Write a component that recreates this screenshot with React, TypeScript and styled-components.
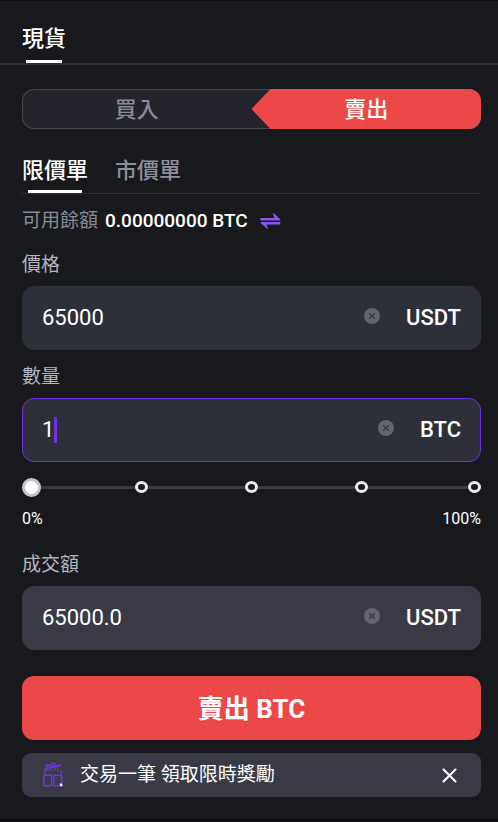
import React, { useState } from "react";
import styled, { createGlobalStyle, css } from "styled-components";

const color = {
  page: "#18191d",
  edge: "#0e0f12",
  line: "#2f2f38",
  field: "#2e3039",
  panel: "#3a3a47",
  white: "#ffffff",
  label: "#b5b6c1",
  muted: "#8a8b98",
  red: "#ec4848",
  violet: "#6f30e6",
};

const GlobalStyle = createGlobalStyle`
  *, *::before, *::after { box-sizing: border-box; }
  body {
    margin: 0;
    background: ${color.page};
    color: ${color.white};
    font-family: Roboto, "Noto Sans CJK TC", sans-serif;
  }
  button, input { font-family: inherit; }
`;

const buttonReset = css`
  margin: 0;
  padding: 0;
  border: 0;
  background: none;
  cursor: pointer;
`;

const Page = styled.main`
  border-top: 1px solid ${color.edge};
  border-bottom: 2px solid ${color.edge};
  padding-bottom: 22px;
`;

const Header = styled.header`
  display: flex;
  padding: 22px 17px 0 22px;
  border-bottom: 2px solid ${color.line};
`;

const Tab = styled.button<{ $active?: boolean; $bar: number; $gap: number }>`
  ${buttonReset}
  display: flex;
  flex-direction: column;
  align-items: center;
  gap: ${(p) => p.$gap}px;
  color: ${(p) => (p.$active ? color.white : "#8e8f9b")};
  font-size: 22px;
  font-weight: 500;
  line-height: 32px;

  &::after {
    content: "";
    width: ${(p) => p.$bar}px;
    height: 3px;
    background: ${(p) => (p.$active ? color.white : "transparent")};
  }
`;

const Form = styled.form`
  display: flex;
  flex-direction: column;
  padding: 24px 17px 0 22px;
`;

const SideSwitch = styled.div`
  display: flex;
  height: 40px;
  border-radius: 12px;
  overflow: hidden;
  background: #24242d;
  box-shadow: inset 0 0 0 1px #474752;
`;

const SideButton = styled.button<{ $selected?: boolean }>`
  ${buttonReset}
  flex: 1;
  padding-top: 2px;
  font-size: 22px;
  line-height: 38px;
  font-weight: 500;
  color: ${(p) => (p.$selected ? color.white : color.muted)};
  ${(p) =>
    p.$selected &&
    css`
      background: ${color.red};
      clip-path: polygon(0 50%, 19px 0, 100% 0, 100% 100%, 19px 100%);
    `}
`;

const OrderTabs = styled.div`
  display: flex;
  gap: 27px;
  padding-top: 26px;
  border-bottom: 1px solid ${color.line};
`;

const Balance = styled.div`
  display: flex;
  align-items: center;
  gap: 7px;
  margin-top: 13px;
  font-size: 19px;
  line-height: 28px;
  color: ${color.muted};
`;

const Amount = styled.strong`
  font-weight: 500;
  color: ${color.white};
`;

const IconButton = styled.button`
  ${buttonReset}
  display: flex;
  flex: none;
`;

const SwapButton = styled(IconButton)`
  margin-left: 5px;
`;

const Field = styled.div<{ $space: number }>`
  display: flex;
  flex-direction: column;
  gap: 7px;
  margin-top: ${(p) => p.$space}px;
`;

const Label = styled.label`
  align-self: flex-start;
  font-size: 19px;
  line-height: 28px;
  color: ${color.label};
`;

const Box = styled.div<{ $active?: boolean; $total?: boolean }>`
  display: flex;
  align-items: center;
  height: 64px;
  padding: 0 19px;
  border: 1px solid
    ${(p) => (p.$active ? color.violet : p.$total ? color.panel : color.field)};
  border-radius: 12px;
  background: ${(p) => (p.$total ? color.panel : color.field)};
`;

const Entry = styled.div`
  display: flex;
  flex: 1;
  min-width: 0;
  align-items: center;
`;

const TextInput = styled.input<{ $fit?: boolean }>`
  min-width: 0;
  flex: ${(p) => (p.$fit ? "none" : "1")};
  margin: 0;
  padding: 0;
  border: 0;
  outline: 0;
  background: none;
  color: ${color.white};
  caret-color: ${(p) => (p.$fit ? "transparent" : color.violet)};
  font-size: 22px;
  line-height: 32px;
`;

const Caret = styled.span`
  width: 3px;
  height: 26px;
  background: ${color.violet};
`;

const ClearButton = styled(IconButton)`
  margin: 0 26px 4px 0;
`;

const Unit = styled.span`
  font-size: 22px;
  font-weight: 500;
  line-height: 32px;
`;

const Slider = styled.div`
  position: relative;
  display: flex;
  align-items: center;
  height: 20px;
  margin-top: 15px;

  &::before {
    content: "";
    flex: 1;
    height: 3px;
    background: ${color.panel};
  }
`;

const Stops = styled.div`
  position: absolute;
  inset: 0;
  display: grid;
  grid-template-columns: 55fr 55fr 55fr 63fr;
  align-items: center;
  padding-left: 3px;
`;

const StopCell = styled.div`
  display: flex;
  justify-content: space-between;
`;

const Stop = styled.span`
  width: 13px;
  height: 12px;
  border: 3px solid #ececec;
  border-radius: 50%;
  background: ${color.page};
`;

const thumb = css`
  width: 19px;
  height: 19px;
  border: 3px solid #c5c6d0;
  border-radius: 50%;
  background: ${color.white};
`;

const Range = styled.input`
  appearance: none;
  position: absolute;
  inset: 0;
  width: 100%;
  height: 100%;
  margin: 0;
  background: transparent;
  cursor: pointer;

  &::-webkit-slider-thumb {
    appearance: none;
    ${thumb}
  }
  &::-moz-range-thumb {
    box-sizing: border-box;
    ${thumb}
  }
`;

const Scale = styled.div`
  display: flex;
  justify-content: space-between;
  margin-top: 12px;
  font-size: 16px;
  line-height: 20px;
`;

const Submit = styled.button`
  ${buttonReset}
  height: 64px;
  margin-top: 26px;
  padding-bottom: 3px;
  border-radius: 12px;
  background: ${color.red};
  color: ${color.white};
  font-size: 26px;
  font-weight: 700;
`;

const Banner = styled.aside`
  display: flex;
  align-items: center;
  height: 44px;
  margin: 13px 17px 0 22px;
  padding: 0 24px 0 21px;
  border-radius: 9px;
  background: ${color.panel};
`;

const BannerText = styled.span`
  flex: 1;
  margin-left: 16px;
  font-size: 19px;
  line-height: 28px;
`;

const SwapIcon = () => (
  <svg width="21" height="16" viewBox="0 0 21 16" fill="#8757f4" aria-hidden="true">
    <path d="M0.5 5H14.5L12.8 0.6Q13.2 0 14 0.6L20.3 6.6Q20.4 7.4 19.6 7.4H0.5Z" />
    <path d="M20.3 11.4H6.5L8 15.3Q7.6 16 6.8 15.4L0.5 9.8Q0.3 9 1.2 9H20.3Z" />
  </svg>
);

const ClearIcon = () => (
  <svg width="16" height="16" viewBox="0 0 16 16" aria-hidden="true">
    <circle cx="8" cy="8" r="8" fill="#626470" />
    <path d="M5.2 5.2L10.8 10.8M10.8 5.2L5.2 10.8" stroke="#363842" strokeWidth="1.3" />
  </svg>
);

const CloseIcon = () => (
  <svg width="15" height="15" viewBox="0 0 15 15" aria-hidden="true">
    <path
      d="M1.5 1.5L13.5 13.5M13.5 1.5L1.5 13.5"
      stroke="#fff"
      strokeWidth="2.1"
      strokeLinecap="round"
    />
  </svg>
);

const GiftIcon = () => (
  <svg width="21" height="26" viewBox="0 0 21 26" fill="none" aria-hidden="true">
    <g stroke="#7030ee" strokeWidth="1.6" strokeLinejoin="round">
      <rect x="0.8" y="13.3" width="7.8" height="10.4" rx="0.8" />
      <rect x="10.9" y="13.3" width="7.8" height="10.4" rx="0.8" />
      <path d="M8.4 5.2C6.2 2.4 2.8 2.6 3.2 4.5C3.6 6.3 6.2 6.5 8.4 5.2Z" />
      <path d="M8.4 5.2C7.6 2.4 9 1 10.9 1.3C13 1.8 11.8 4.4 8.4 5.2Z" />
      <path d="M0.4 8.1L5 6.6M8.6 5.6L18 3.1" strokeWidth="2" />
    </g>
    <path
      d="M1 9.8L6.5 8.3L11.4 7.4L15 6.2M1 11.6L4 10.5M14 8.6L19 9"
      stroke="#616170"
      strokeWidth="1"
      strokeDasharray="2 1.4"
    />
    <path d="M17 10.6H19.3" stroke="#7030ee" strokeWidth="1.2" />
    <path d="M16.8 21.2L19.4 22V24.2L17.8 24.6L16.8 23.4Z" fill="#ebe4ff" />
  </svg>
);

type AmountFieldProps = {
  id: string;
  label: string;
  unit: string;
  initial: string;
  space: number;
  active?: boolean;
  total?: boolean;
};

function AmountField({ id, label, unit, initial, space, active, total }: AmountFieldProps) {
  const [value, setValue] = useState(initial);
  return (
    <Field $space={space}>
      <Label htmlFor={id}>{label}</Label>
      <Box $active={active} $total={total}>
        <Entry>
          <TextInput
            id={id}
            inputMode="decimal"
            value={value}
            $fit={active}
            style={active ? { width: `${Math.max(value.length, 1)}ch` } : undefined}
            onChange={(e) => setValue(e.target.value)}
          />
          {active && <Caret />}
        </Entry>
        <ClearButton type="button" aria-label={`清除${label}`} onClick={() => setValue("")}>
          <ClearIcon />
        </ClearButton>
        <Unit>{unit}</Unit>
      </Box>
    </Field>
  );
}

export default function App() {
  const [percent, setPercent] = useState(0);
  const [bannerOpen, setBannerOpen] = useState(true);

  return (
    <>
      <GlobalStyle />
      <Page>
        <Header>
          <Tab type="button" $active $bar={36} $gap={5}>
            現貨
          </Tab>
        </Header>
        <Form onSubmit={(e) => e.preventDefault()}>
          <SideSwitch>
            <SideButton type="button">買入</SideButton>
            <SideButton type="button" $selected>
              賣出
            </SideButton>
          </SideSwitch>
          <OrderTabs>
            <Tab type="button" $active $bar={54} $gap={3}>
              限價單
            </Tab>
            <Tab type="button" $bar={54} $gap={3}>
              市價單
            </Tab>
          </OrderTabs>
          <Balance>
            <span>可用餘額</span>
            <Amount>0.00000000 BTC</Amount>
            <SwapButton type="button" aria-label="劃轉">
              <SwapIcon />
            </SwapButton>
          </Balance>
          <AmountField id="price" label="價格" unit="USDT" initial="65000" space={16} />
          <AmountField id="quantity" label="數量" unit="BTC" initial="1" space={13} active />
          <Slider>
            <Stops>
              <StopCell />
              <StopCell>
                <Stop />
              </StopCell>
              <StopCell>
                <Stop />
              </StopCell>
              <StopCell>
                <Stop />
                <Stop />
              </StopCell>
            </Stops>
            <Range
              type="range"
              min={0}
              max={100}
              value={percent}
              aria-label="數量百分比"
              onChange={(e) => setPercent(Number(e.target.value))}
            />
          </Slider>
          <Scale>
            <span>0%</span>
            <span>100%</span>
          </Scale>
          <AmountField id="total" label="成交額" unit="USDT" initial="65000.0" space={22} total />
          <Submit type="submit">賣出 BTC</Submit>
        </Form>
        {bannerOpen && (
          <Banner>
            <GiftIcon />
            <BannerText>交易一筆 領取限時獎勵</BannerText>
            <IconButton type="button" aria-label="關閉" onClick={() => setBannerOpen(false)}>
              <CloseIcon />
            </IconButton>
          </Banner>
        )}
      </Page>
    </>
  );
}
